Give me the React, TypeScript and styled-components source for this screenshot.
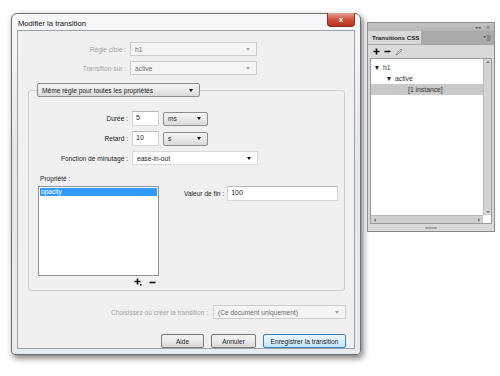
import React from "react";
import styled, { createGlobalStyle, css } from "styled-components";

const GlobalStyle = createGlobalStyle`
  html, body {
    margin: 0;
    padding: 0;
    background: #ffffff;
  }
  body {
    font-family: "Liberation Sans", Arial, sans-serif;
    font-size: 6.6px;
    color: #1e1e1e;
  }
  * {
    box-sizing: border-box;
  }
`;

const Desk = styled.div`
  display: flex;
  align-items: flex-start;
  gap: 6px;
  width: 500px;
  height: 376px;
  padding: 13px 0 0 11px;
  overflow: hidden;
`;

const DialogWindow = styled.div`
  width: 350px;
  display: flex;
  flex-direction: column;
  padding: 0 5px 5px;
  border: 1px solid #6f6f6f;
  border-radius: 6px 6px 4px 4px;
  background: linear-gradient(180deg, #f7f8fa 0%, #e4e7eb 40%, #e9ecef 100%);
  box-shadow: 2px 3px 6px rgba(0, 0, 0, 0.55);
`;

const TitleBar = styled.div`
  height: 16px;
  display: flex;
  align-items: flex-start;
  justify-content: space-between;
`;

const Title = styled.span`
  font-size: 7.6px;
  color: #111;
  margin-top: 5px;
  margin-left: 1px;
`;

const CloseButton = styled.div`
  width: 28px;
  height: 14px;
  margin-top: -1px;
  border: 1px solid #8a2d22;
  border-top: none;
  border-radius: 0 0 4px 4px;
  background: linear-gradient(180deg, #e7a295 0%, #d0503c 50%, #b8321f 100%);
  color: #fff;
  font-size: 8px;
  font-weight: bold;
  display: flex;
  align-items: center;
  justify-content: center;
`;

const Content = styled.div`
  height: 319px;
  background: #f0f0f0;
  border: 1px solid #9aa2ab;
  display: flex;
  flex-direction: column;
`;

const TopForm = styled.div`
  display: grid;
  grid-template-columns: 108px 127px;
  column-gap: 4px;
  row-gap: 5px;
  margin-top: 11px;
`;

const FieldLabel = styled.span<{ $muted?: boolean }>`
  text-align: right;
  align-self: center;
  white-space: nowrap;
  color: ${(p) => (p.$muted ? "#a3a3a3" : "#1e1e1e")};
`;

const Arrow = styled.span<{ $muted?: boolean }>`
  width: 0;
  height: 0;
  border-left: 2.5px solid transparent;
  border-right: 2.5px solid transparent;
  border-top: 3px solid ${(p) => (p.$muted ? "#a8a8a8" : "#111")};
  flex-shrink: 0;
`;

type ComboKind = "disabled" | "button" | "field";

const Combo = styled.div<{ $kind: ComboKind; $w: number }>`
  width: ${(p) => p.$w}px;
  height: 14px;
  display: flex;
  align-items: center;
  justify-content: space-between;
  padding: 0 6px 0 4px;
  white-space: nowrap;
  ${(p) =>
    p.$kind === "disabled" &&
    css`
      background: #f5f5f5;
      border: 1px solid #cdcdcd;
      color: #6a6a6a;
    `}
  ${(p) =>
    p.$kind === "button" &&
    css`
      background: linear-gradient(180deg, #f4f4f4 0%, #e9e9e9 50%, #d9d9d9 100%);
      border: 1px solid #8e8e8e;
      border-radius: 2px;
      color: #1e1e1e;
    `}
  ${(p) =>
    p.$kind === "field" &&
    css`
      background: #ffffff;
      border: 1px solid #dadada;
      color: #1e1e1e;
    `}
`;

const TextBox = styled.div<{ $w: number }>`
  width: ${(p) => p.$w}px;
  height: 15px;
  background: #fff;
  border: 1px solid #d6d6d6;
  border-top-color: #b9b9b9;
  padding: 0 3px 2px;
  display: flex;
  align-items: center;
  font-size: 7px;
`;

const GroupBox = styled.fieldset`
  margin: 8px 9px 0 10px;
  padding: 0 0 2px;
  border: 1px solid #cfcfcf;
  border-radius: 3px;
  min-width: 0;
`;

const GroupLegend = styled.legend`
  margin-left: 8px;
  padding: 0;
`;

const TimingGrid = styled.div`
  display: grid;
  grid-template-columns: 99px auto;
  column-gap: 4px;
  row-gap: 5px;
  margin-top: 14px;
  justify-content: start;
`;

const InlinePair = styled.div`
  display: flex;
  align-items: center;
  gap: 4px;
`;

const PropArea = styled.div`
  display: flex;
  align-items: flex-start;
  gap: 25px;
  margin: 10px 0 0 9px;
`;

const PropColumn = styled.div`
  display: flex;
  flex-direction: column;
`;

const SmallLabel = styled.span`
  height: 11px;
  padding-left: 2px;
`;

const ListBox = styled.div`
  width: 121px;
  height: 90px;
  background: #fff;
  border: 1px solid #8f949b;
  padding: 1px;
`;

const ListItem = styled.div<{ $selected?: boolean }>`
  height: 8px;
  line-height: 8px;
  padding-left: 1px;
  background: ${(p) => (p.$selected ? "#3399ff" : "transparent")};
  color: ${(p) => (p.$selected ? "#ffffff" : "#1e1e1e")};
`;

const IconRow = styled.div`
  display: flex;
  justify-content: flex-end;
  align-items: center;
  gap: 7px;
  height: 12px;
  padding-right: 3px;
`;

const EndValue = styled.div`
  display: flex;
  align-items: center;
  gap: 3px;
  margin-top: 11px;
`;

const WhereRow = styled.div`
  display: flex;
  justify-content: flex-end;
  align-items: center;
  gap: 5px;
  margin: 14px 8px 0 0;
`;

const ButtonRow = styled.div`
  display: flex;
  justify-content: flex-end;
  gap: 7px;
  margin: 15px 8px 0 0;
`;

const PushButton = styled.div<{ $w: number; $default?: boolean }>`
  width: ${(p) => p.$w}px;
  height: 14px;
  display: flex;
  align-items: center;
  justify-content: center;
  border-radius: 2px;
  border: 1px solid ${(p) => (p.$default ? "#3c7fb1" : "#7a7a7a")};
  background: ${(p) =>
    p.$default
      ? "linear-gradient(180deg, #eaf6fd 0%, #d9f0fc 50%, #bee6fd 100%)"
      : "linear-gradient(180deg, #f2f2f2 0%, #ebebeb 50%, #d6d6d6 100%)"};
  color: #1e1e1e;
`;

/* ---- right panel ---- */

const Panel = styled.div`
  width: 128px;
  height: 210px;
  margin-top: 9px;
  border: 1px solid #8c8c8c;
  background: #d9d9d9;
  display: flex;
  flex-direction: column;
`;

const PanelStrip = styled.div`
  height: 8px;
  background: linear-gradient(180deg, #c4c4c4, #b4b4b4);
  display: flex;
  justify-content: flex-end;
  align-items: center;
  gap: 5px;
  padding-right: 4px;
  color: #555;
  font-size: 5px;
  line-height: 8px;
`;

const TabRow = styled.div`
  height: 14px;
  display: flex;
  background: #a9a9a9;
  border-bottom: 1px solid #a9a9a9;
`;

const Tab = styled.div`
  width: 53px;
  background: #d9d9d9;
  font-weight: bold;
  font-size: 6.2px;
  white-space: nowrap;
  display: flex;
  align-items: center;
  padding-left: 4px;
  color: #222;
`;

const TabFill = styled.div`
  flex: 1;
  display: flex;
  justify-content: flex-end;
  align-items: center;
  padding-right: 3px;
`;

const PanelTools = styled.div`
  height: 13px;
  display: flex;
  align-items: center;
  gap: 4px;
  padding-left: 5px;
`;

const TreeBox = styled.div`
  margin: 0 2px 0 2px;
  height: 166px;
  background: #fff;
  border: 1px solid #9a9a9a;
  display: grid;
  grid-template-columns: 1fr 8px;
  grid-template-rows: 1fr 8px;
`;

const TreeList = styled.div`
  padding-top: 3px;
`;

const TreeRow = styled.div<{ $indent: number; $selected?: boolean }>`
  height: 11px;
  display: flex;
  align-items: center;
  gap: 4px;
  padding-left: ${(p) => p.$indent}px;
  background: ${(p) => (p.$selected ? "#c8c8c8" : "transparent")};
  color: #333;
  font-size: 6.8px;
`;

const ScrollV = styled.div`
  background: #d4d4d4;
  border-left: 1px solid #bdbdbd;
  display: flex;
  flex-direction: column;
  justify-content: space-between;
  align-items: center;
  padding: 2px 0;
`;

const ScrollH = styled.div`
  background: #cfcfcf;
  border-top: 1px solid #b9b9b9;
  display: flex;
  justify-content: space-between;
  align-items: center;
  padding: 0 3px;
`;

const Corner = styled.div`
  background: #fff;
`;

const SmallTri = styled.span<{ $dir: "up" | "down" | "left" | "right" }>`
  width: 0;
  height: 0;
  ${(p) =>
    p.$dir === "up" &&
    css`
      border-left: 2px solid transparent;
      border-right: 2px solid transparent;
      border-bottom: 2px solid #777;
    `}
  ${(p) =>
    p.$dir === "down" &&
    css`
      border-left: 2px solid transparent;
      border-right: 2px solid transparent;
      border-top: 2px solid #777;
    `}
  ${(p) =>
    p.$dir === "left" &&
    css`
      border-top: 2px solid transparent;
      border-bottom: 2px solid transparent;
      border-right: 2px solid #777;
    `}
  ${(p) =>
    p.$dir === "right" &&
    css`
      border-top: 2px solid transparent;
      border-bottom: 2px solid transparent;
      border-left: 2px solid #777;
    `}
`;

const TreeTri = styled.span`
  width: 0;
  height: 0;
  border-left: 2.5px solid transparent;
  border-right: 2.5px solid transparent;
  border-top: 4px solid #222;
`;

const PanelFoot = styled.div`
  flex: 1;
  display: flex;
  justify-content: center;
  align-items: center;
`;

const Grip = styled.div`
  width: 12px;
  height: 2px;
  border-top: 1px solid #a8a8a8;
  border-bottom: 1px solid #a8a8a8;
`;

const PlusIcon = () => (
  <svg width="7" height="7" viewBox="0 0 7 7">
    <path d="M3.5 0.5v6M0.5 3.5h6" stroke="#111" strokeWidth="1.6" />
  </svg>
);

const MinusIcon = () => (
  <svg width="7" height="7" viewBox="0 0 7 7">
    <path d="M0.5 3.5h6" stroke="#111" strokeWidth="1.6" />
  </svg>
);

const AddPropIcon = () => (
  <svg width="8" height="8" viewBox="0 0 8 8">
    <path d="M3.5 0.5v6M0.5 3.5h6" stroke="#111" strokeWidth="1.6" />
    <circle cx="6.8" cy="6.8" r="0.9" fill="#111" />
  </svg>
);

const BrushIcon = () => (
  <svg width="8" height="8" viewBox="0 0 8 8">
    <path d="M1 7 L2 5 L6 1 L7 2 L3 6 Z" fill="#e6e6e6" stroke="#777" strokeWidth="0.7" />
  </svg>
);

const MenuIcon = () => (
  <svg width="8" height="6" viewBox="0 0 8 6">
    <path d="M0.5 1.5 L3 1.5 L1.75 3 Z" fill="#333" />
    <path d="M4 1h3.5M4 3h3.5M4 5h3.5" stroke="#555" strokeWidth="0.8" />
  </svg>
);

export default function App() {
  return (
    <>
      <GlobalStyle />
      <Desk>
        <DialogWindow>
          <TitleBar>
            <Title>Modifier la transition</Title>
            <CloseButton>x</CloseButton>
          </TitleBar>
          <Content>
            <TopForm>
              <FieldLabel $muted>Règle cible :</FieldLabel>
              <Combo $kind="disabled" $w={127}>
                <span>h1</span>
                <Arrow $muted />
              </Combo>
              <FieldLabel $muted>Transition sur :</FieldLabel>
              <Combo $kind="disabled" $w={127}>
                <span>active</span>
                <Arrow $muted />
              </Combo>
            </TopForm>

            <GroupBox>
              <GroupLegend>
                <Combo $kind="button" $w={163}>
                  <span>Même règle pour toutes les propriétés</span>
                  <Arrow />
                </Combo>
              </GroupLegend>

              <TimingGrid>
                <FieldLabel>Durée :</FieldLabel>
                <InlinePair>
                  <TextBox $w={27}>5</TextBox>
                  <Combo $kind="button" $w={45}>
                    <span>ms</span>
                    <Arrow />
                  </Combo>
                </InlinePair>
                <FieldLabel>Retard :</FieldLabel>
                <InlinePair>
                  <TextBox $w={27}>10</TextBox>
                  <Combo $kind="button" $w={45}>
                    <span>s</span>
                    <Arrow />
                  </Combo>
                </InlinePair>
                <FieldLabel>Fonction de minutage :</FieldLabel>
                <Combo $kind="field" $w={126}>
                  <span>ease-in-out</span>
                  <Arrow />
                </Combo>
              </TimingGrid>

              <PropArea>
                <PropColumn>
                  <SmallLabel>Propriété :</SmallLabel>
                  <ListBox>
                    <ListItem $selected>opacity</ListItem>
                  </ListBox>
                  <IconRow>
                    <AddPropIcon />
                    <MinusIcon />
                  </IconRow>
                </PropColumn>
                <EndValue>
                  <span>Valeur de fin :</span>
                  <TextBox $w={111}>100</TextBox>
                </EndValue>
              </PropArea>
            </GroupBox>

            <WhereRow>
              <FieldLabel $muted>Choisissez où créer la transition :</FieldLabel>
              <Combo $kind="disabled" $w={133}>
                <span>(Ce document uniquement)</span>
                <Arrow $muted />
              </Combo>
            </WhereRow>

            <ButtonRow>
              <PushButton $w={43}>Aide</PushButton>
              <PushButton $w={45}>Annuler</PushButton>
              <PushButton $w={83} $default>
                Enregistrer la transition
              </PushButton>
            </ButtonRow>
          </Content>
        </DialogWindow>

        <Panel>
          <PanelStrip>
            <span>◂◂</span>
            <span>✕</span>
          </PanelStrip>
          <TabRow>
            <Tab>Transitions CSS</Tab>
            <TabFill>
              <MenuIcon />
            </TabFill>
          </TabRow>
          <PanelTools>
            <PlusIcon />
            <MinusIcon />
            <BrushIcon />
          </PanelTools>
          <TreeBox>
            <TreeList>
              <TreeRow $indent={4}>
                <TreeTri />
                <span>h1</span>
              </TreeRow>
              <TreeRow $indent={16}>
                <TreeTri />
                <span>active</span>
              </TreeRow>
              <TreeRow $indent={37} $selected>
                <span>[1 instance]</span>
              </TreeRow>
            </TreeList>
            <ScrollV>
              <SmallTri $dir="up" />
              <SmallTri $dir="down" />
            </ScrollV>
            <ScrollH>
              <SmallTri $dir="left" />
              <SmallTri $dir="right" />
            </ScrollH>
            <Corner />
          </TreeBox>
          <PanelFoot>
            <Grip />
          </PanelFoot>
        </Panel>
      </Desk>
    </>
  );
}
